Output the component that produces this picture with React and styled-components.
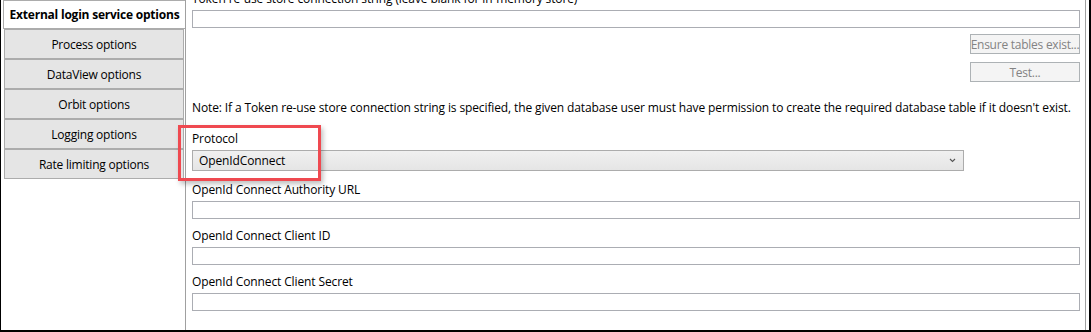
import React from 'react'
import styled, { createGlobalStyle } from 'styled-components'

const GlobalStyle = createGlobalStyle`
  html, body {
    margin: 0;
    padding: 0;
    background: #ffffff;
  }
  body {
    font-family: 'Open Sans', 'Noto Sans', sans-serif;
    font-size: 12px;
    letter-spacing: -0.12px;
    color: #000000;
  }
`

const Frame = styled.div`
  position: relative;
  box-sizing: border-box;
  width: 1091px;
  height: 332px;
  display: flex;
  background: #ffffff;
  border-left: 1px solid #000000;
  border-right: 2px solid #000000;
  border-bottom: 2px solid #000000;
  padding-right: 3px;
  overflow: hidden;
`

const Sidebar = styled.div`
  box-sizing: border-box;
  width: 184px;
  flex: none;
  display: flex;
  flex-direction: column;
  padding-left: 2px;
`

const Tab = styled.div`
  box-sizing: border-box;
  display: flex;
  align-items: center;
  justify-content: center;
  border: 1px solid #acacac;
  background: ${p => (p.$active ? '#ffffff' : '#e5e5e5')};
  font-weight: ${p => (p.$active ? 700 : 400)};
  margin: ${p => (p.$active ? '0 -1px 0 0' : '0 1px 0 1px')};
  height: ${p => (p.$active ? '29px' : '30px')};
  letter-spacing: -0.22px;
  white-space: nowrap;
`

const Content = styled.div`
  box-sizing: border-box;
  flex: 1;
  border-left: 1px solid #a0a0a0;
  border-right: 1px solid #a0a0a0;
  overflow: hidden;
`

const Scroller = styled.div`
  display: flex;
  flex-direction: column;
  padding: 0 5px 0 6px;
  margin-top: -9px;
`

const Label = styled.div`
  line-height: 16px;
  height: 16px;
  margin-top: ${p => p.$top || 0}px;
  white-space: nowrap;
`

const TextBox = styled.div`
  box-sizing: border-box;
  height: 18px;
  margin-top: 3px;
  border: 1px solid #abadb3;
  background: #ffffff;
`

const ButtonColumn = styled.div`
  display: flex;
  flex-direction: column;
  align-items: flex-end;
  gap: 8px;
  margin-top: 6px;
`

const Button = styled.div`
  box-sizing: border-box;
  width: 110px;
  height: 20px;
  display: flex;
  align-items: center;
  justify-content: center;
  border: 1px solid #adb2b5;
  background: #f4f4f4;
  color: #838383;
  letter-spacing: -0.25px;
  white-space: nowrap;
`

const Select = styled.div`
  box-sizing: border-box;
  width: 772px;
  height: 21px;
  margin-top: 3px;
  display: flex;
  align-items: center;
  justify-content: space-between;
  padding: 0 7px 0 6px;
  border: 1px solid #acacac;
  background: linear-gradient(#f0f0f0, #e5e5e5);
`

const Chevron = styled.svg`
  width: 7px;
  height: 5px;
`

const Highlight = styled.div`
  position: absolute;
  left: 177px;
  top: 125px;
  width: 143px;
  height: 56px;
  box-sizing: border-box;
  border: 3px solid #ef4950;
  box-shadow: 2px 3px 5px rgba(0, 0, 0, 0.25);
  pointer-events: none;
`

const tabs = [
  'Process options',
  'DataView options',
  'Orbit options',
  'Logging options',
  'Rate limiting options',
]

export default function App() {
  return (
    <>
      <GlobalStyle />
      <Frame>
        <Sidebar>
          <Tab $active>External login service options</Tab>
          {tabs.map(t => (
            <Tab key={t}>{t}</Tab>
          ))}
        </Sidebar>
        <Content>
          <Scroller>
            <Label>Token re-use store connection string (leave blank for in-memory store)</Label>
            <TextBox />
            <ButtonColumn>
              <Button>Ensure tables exist...</Button>
              <Button>Test...</Button>
            </ButtonColumn>
            <Label $top={18}>
              Note: If a Token re-use store connection string is specified, the given database user must have permission to create the required database table if it doesn't exist.
            </Label>
            <Label $top={15}>Protocol</Label>
            <Select>
              <span>OpenIdConnect</span>
              <Chevron viewBox="0 0 7 5">
                <path d="M1 1 L3.5 3.5 L6 1" fill="none" stroke="#555" strokeWidth="1.1" />
              </Chevron>
            </Select>
            <Label $top={11}>OpenId Connect Authority URL</Label>
            <TextBox />
            <Label $top={9}>OpenId Connect Client ID</Label>
            <TextBox />
            <Label $top={9}>OpenId Connect Client Secret</Label>
            <TextBox />
          </Scroller>
        </Content>
        <Highlight />
      </Frame>
    </>
  )
}
